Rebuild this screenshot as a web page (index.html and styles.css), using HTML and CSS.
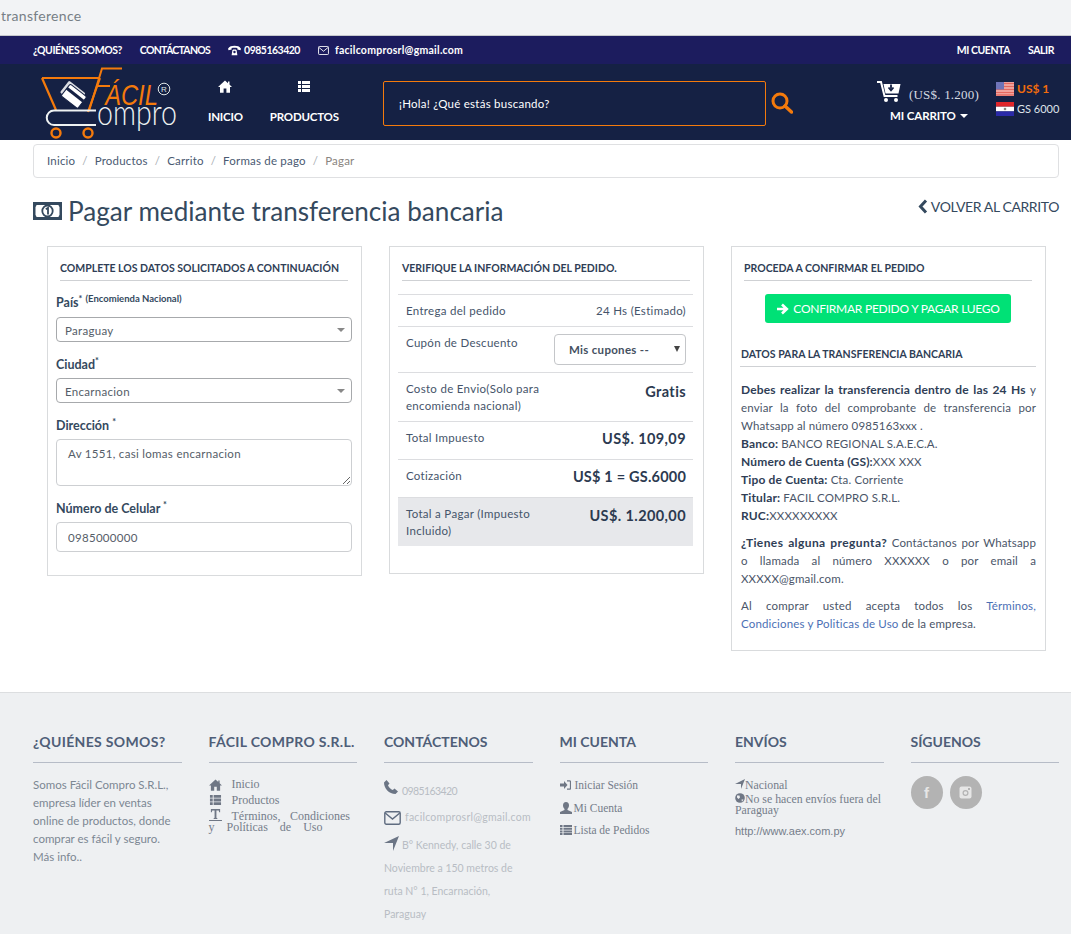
FILE: index.html
```html
<!DOCTYPE html>
<html lang="es">
<head>
<meta charset="utf-8">
<title>Pagar mediante transferencia bancaria</title>
<link rel="stylesheet" href="styles.css">
</head>
<body>
<div class="urlbar">transference</div>
<div class="topbar">
  <div class="topbar-left">
    <a>¿QUIÉNES SOMOS?</a>
    <a class="tight">CONTÁCTANOS</a>
    <a class="with-icon num"><svg class="ic-phone-alt" viewBox="0 0 14 11"><path d="M0 3.6C1.5 1 4 .4 7 .4s5.500.6 7 3.200l-.6 1.500-3.300-.6V2.900C9.200 2.500 4.800 2.500 3.900 2.900v1.600l-3.300.6z" fill="#fff"/><path d="M3.900 10.500 4.700 5.400 5.600 4.300h2.800l.9 1.100.8 5.100z" fill="#fff"/><circle cx="7" cy="7.200" r="1.300" fill="#1c1c5e"/></svg>0985163420</a>
    <a class="with-icon mail"><svg class="ic-mail" viewBox="0 0 12 10"><rect x=".5" y=".5" width="11" height="9" rx="1" fill="none" stroke="#fff"/><path d="M.8 1.500 6 5.800l5.200-4.300" fill="none" stroke="#fff"/></svg>facilcomprosrl@gmail.com</a>
  </div>
  <div class="topbar-right"><a>MI CUENTA</a><a>SALIR</a></div>
</div>
<header class="header">
  <svg class="logo" viewBox="0 0 140 76" role="img" aria-label="Fácil Compro">
    <path d="M2 14H60M2 14 16 46M60 14 48 48" fill="none" stroke="#f47a0c" stroke-width="2.200"/>
    <path d="M49 47 62 4.500H82M57 22H70" fill="none" stroke="#f47a0c" stroke-width="2"/>
    <text class="logo-facil" transform="translate(65 41) scale(1 1.200)" textLength="53" lengthAdjust="spacingAndGlyphs">ÁCIL</text>
    <g transform="rotate(38 33 31)"><rect x="21" y="22" width="21" height="15" rx="1.500" fill="#fff" opacity=".85"/><rect x="24" y="24" width="21" height="15" rx="1.500" fill="#fff" stroke="#152144"/><rect x="24" y="28" width="21" height="3" fill="#152144"/></g>
    <path d="M56 46.500H14a6.500 6.500 0 0 0 0 14.500H56" fill="none" stroke="#eef2f2" stroke-width="2"/>
    <text class="logo-compro" transform="translate(57 61) scale(1 1.250)" textLength="80" lengthAdjust="spacingAndGlyphs">ompro</text>
    <circle cx="16" cy="69" r="4.500" fill="none" stroke="#f47a0c" stroke-width="2.400"/>
    <circle cx="48" cy="69" r="4.500" fill="none" stroke="#f47a0c" stroke-width="2.400"/>
    <circle cx="124" cy="25" r="5.800" fill="none" stroke="#dfe6e6"/>
    <text class="logo-r" x="124" y="28" text-anchor="middle">R</text>
  </svg>
  <nav class="mainnav">
    <a><svg class="ic-nav" viewBox="0 0 14 13"><path d="M7 .5 0 7h2v5.800h3.600V8.500h2.800v4.300H12V7h2l-2.500-2.400V1.500H10v1.700z" fill="#fff"/></svg><span>INICIO</span></a>
    <a><svg class="ic-nav" viewBox="0 0 14 13"><path d="M1 1h3v3H1zM5 1h8v3H5zM1 5h3v3H1zM5 5h8v3H5zM1 9h3v3H1zM5 9h8v3H5z" fill="#fff"/></svg><span>PRODUCTOS</span></a>
  </nav>
  <div class="search">¡Hola! ¿Qué estás buscando?</div>
  <svg class="ic-search" viewBox="0 0 22 22"><circle cx="9" cy="9" r="7" fill="none" stroke="#f47a0c" stroke-width="3"/><path d="M14 14l6.500 6" stroke="#f47a0c" stroke-width="3.500" stroke-linecap="round"/></svg>
  <div class="cart">
    <div class="cart-top">
      <svg class="ic-cart" viewBox="0 0 24 22"><path d="M0 1h4l3.500 14h13" fill="none" stroke="#fff" stroke-width="2"/><path d="M6.500 3h17l-2 9.500H8.500z" fill="#fff"/><path d="M14 3.500v4M11.500 6.500l2.500 2.800 2.500-2.800" fill="none" stroke="#152144" stroke-width="1.800"/><circle cx="9" cy="19" r="2" fill="#fff"/><circle cx="19" cy="19" r="2" fill="#fff"/></svg>
      <span class="cart-amount">(US$. 1.200)</span>
    </div>
    <div class="cart-label">MI CARRITO <i class="caret"></i></div>
  </div>
  <div class="rates">
    <div class="rate usd"><svg class="flag" viewBox="0 0 18 14"><rect width="18" height="14" fill="#f4b6b0"/><path d="M0 1.500h18M0 4.500h18M0 7.500h18M0 10.500h18M0 13h18" stroke="#e4685f" stroke-width="1.300"/><rect width="8" height="7.500" fill="#6f74b8"/></svg>US$ 1</div>
    <div class="rate"><svg class="flag" viewBox="0 0 18 14"><rect width="18" height="4.700" fill="#e0262b"/><rect y="4.700" width="18" height="4.700" fill="#fff"/><rect y="9.400" width="18" height="4.600" fill="#2a2aa8"/><circle cx="9" cy="7" r="1.300" fill="#8a8a80"/></svg>GS 6000</div>
  </div>
</header>

<main class="page">
  <ol class="breadcrumb">
    <li><a>Inicio</a></li><li><a>Productos</a></li><li><a>Carrito</a></li><li><a>Formas de pago</a></li><li class="current">Pagar</li>
  </ol>
  <div class="title-row">
    <h1><svg class="ic-money" viewBox="0 0 29 18"><path d="M0 0h29v18H0z" fill="#34495e"/><path d="M3.500 3h22a3 3 0 0 0 1 2v8a3 3 0 0 0-1 2h-22a3 3 0 0 0-1-2V5a3 3 0 0 0 1-2z" fill="#fff"/><ellipse cx="14.500" cy="9" rx="5.200" ry="5.500" fill="#fff" stroke="#34495e" stroke-width="1.800"/><path d="M12.800 7.200 15 5.800V12.500" fill="none" stroke="#34495e" stroke-width="1.800"/></svg>Pagar mediante transferencia bancaria</h1>
    <a class="back"><svg class="ic-chev" viewBox="0 0 10 15"><path d="M8 1.500 2.500 7.500 8 13.500" fill="none" stroke="#34495e" stroke-width="3"/></svg>VOLVER AL CARRITO</a>
  </div>

  <div class="cards">
    <section class="card">
      <h5 class="card-title">COMPLETE LOS DATOS SOLICITADOS A CONTINUACIÓN</h5>
      <form class="form">
        <label class="lbl lbl-pais">País<sup>*</sup> <sup class="small">(Encomienda Nacional)</sup></label>
        <div class="select-wrap"><select class="control"><option>Paraguay</option></select></div>
        <label class="lbl">Ciudad<sup>*</sup></label>
        <div class="select-wrap"><select class="control"><option>Encarnacion</option></select></div>
        <label class="lbl">Dirección <sup>*</sup></label>
        <textarea class="control area">Av 1551, casi lomas encarnacion</textarea>
        <label class="lbl">Número de Celular <sup>*</sup></label>
        <input class="control phone" value="0985000000">
      </form>
    </section>

    <section class="card">
      <h5 class="card-title">VERIFIQUE LA INFORMACIÓN DEL PEDIDO.</h5>
      <div class="summary">
        <div class="row r1"><span>Entrega del pedido</span><span>24 Hs (Estimado)</span></div>
        <div class="row r2"><span>Cupón de Descuento</span><div class="coupon">Mis cupones --<i></i></div></div>
        <div class="row r3"><span class="wrap">Costo de Envio(Solo para encomienda nacional)</span><b>Gratis</b></div>
        <div class="row r4"><span>Total Impuesto</span><b>US$. 109,09</b></div>
        <div class="row r4"><span>Cotización</span><b class="rate-val">US$ 1 = GS.6000</b></div>
        <div class="row r3 total"><span class="wrap">Total a Pagar (Impuesto Incluido)</span><b>US$. 1.200,00</b></div>
      </div>
    </section>

    <section class="card card-pay">
      <h5 class="card-title">PROCEDA A CONFIRMAR EL PEDIDO</h5>
      <a class="confirm"><svg class="ic-arrow" viewBox="0 0 13 12"><path d="M1 6h9M6 1.500 10.800 6 6 10.500" fill="none" stroke="#fff" stroke-width="2.600"/></svg>CONFIRMAR PEDIDO Y PAGAR LUEGO</a>
      <h5 class="card-sub">DATOS PARA LA TRANSFERENCIA BANCARIA</h5>
      <p class="just"><b>Debes realizar la transferencia dentro de las 24 Hs</b> y enviar la foto del comprobante de transferencia por Whatsapp al número 0985163xxx .</p>
      <p><b>Banco:</b> BANCO REGIONAL S.A.E.C.A.<br><b>Número de Cuenta (GS):</b>XXX XXX<br><b>Tipo de Cuenta:</b> Cta. Corriente<br><b>Titular:</b> FACIL COMPRO S.R.L.<br><b>RUC:</b>XXXXXXXXX</p>
      <p class="just gap"><b>¿Tienes alguna pregunta?</b> Contáctanos por Whatsapp o llamada al número XXXXXX o por email a XXXXX@gmail.com.</p>
      <p class="gap"><span class="line-just">Al comprar usted acepta todos los <a class="link">Términos,</a></span><a class="link">Condiciones y Politicas de Uso</a> de la empresa.</p>
    </section>
  </div>
</main>

<footer class="footer">
  <div class="fcol">
    <h4 class="wide">¿QUIÉNES SOMOS?</h4>
    <p class="about">Somos Fácil Compro S.R.L., empresa líder en ventas online de productos, donde comprar es fácil y seguro.<br>Más info..</p>
  </div>
  <div class="fcol">
    <h4 class="wide">FÁCIL COMPRO S.R.L.</h4>
    <ul class="flinks">
      <li><svg class="ic-f" viewBox="0 0 14 13"><path d="M7 .5 0 7h2v5.800h3.600V8.500h2.800v4.300H12V7h2l-2.500-2.400V1.500H10v1.700z"/></svg>Inicio</li>
      <li><svg class="ic-f" viewBox="0 0 14 13"><path d="M1 1h3v3H1zM5 1h8v3H5zM1 5h3v3H1zM5 5h8v3H5zM1 9h3v3H1zM5 9h8v3H5z"/></svg>Productos</li>
      <li class="terms"><span class="t1"><svg class="ic-f" viewBox="0 0 14 13"><path d="M2 0h10v3.500h-1L10.500 1.500H8V9.500l1 .5v.8H5V10l1-.5V1.500H3.500L3 3.500H2zM0 12h14v1H0z"/></svg>Términos, Condiciones</span><span class="t2">y Políticas de Uso</span></li>
    </ul>
  </div>
  <div class="fcol">
    <h4>CONTÁCTENOS</h4>
    <div class="contact">
      <div class="c-phone"><svg class="ic-c1" viewBox="0 0 14 14"><path d="M0 2.500 2.500 0l3 3.500L4 5.200c.8 2 2.500 3.800 4.800 4.800l1.700-1.500L14 11.500 11.500 14C5 14 0 8.500 0 2.500z"/></svg>0985163420</div>
      <div class="c-mail"><svg class="ic-c2" viewBox="0 0 17 14"><rect x=".8" y=".8" width="15.400" height="12.400" rx="1.500" fill="none" stroke="#5f6c80" stroke-width="1.400"/><path d="M1.200 2 8.500 8 15.800 2" fill="none" stroke="#5f6c80" stroke-width="1.400"/></svg>facilcomprosrl@gmail.com</div>
      <div class="c-addr"><svg class="ic-c3" viewBox="0 0 15 15"><path d="M15 0 9 15V7H0z"/></svg>B° Kennedy, calle 30 de Noviembre a 150 metros de ruta N° 1, Encarnación, Paraguay</div>
    </div>
  </div>
  <div class="fcol">
    <h4>MI CUENTA</h4>
    <ul class="faccount">
      <li><svg class="ic-a" viewBox="0 0 11 10"><path d="M0 3.500h4V1l3.500 4L4 9V6.500H0z"/><path d="M7 .8h2.500c.8 0 1 .5 1 1v6.400c0 .5-.2 1-1 1H7" fill="none" stroke="#6f7785" stroke-width="1.200"/></svg>Iniciar Sesión</li>
      <li><svg class="ic-a2" viewBox="0 0 12 12"><path d="M6 0c2 0 3 1.500 3 3.500 0 1.500-.8 2.800-1.500 3.500v1l4.500 2v2H0v-2l4.500-2V7C3.800 6.300 3 5 3 3.500 3 1.500 4 0 6 0z"/></svg>Mi Cuenta</li>
      <li><svg class="ic-a3" viewBox="0 0 12 10"><path d="M0 0h2.500v2H0zM3.500 0H12v2H3.500zM0 2.700h2.500v2H0zM3.500 2.700H12v2H3.500zM0 5.400h2.500v2H0zM3.500 5.400H12v2H3.500zM0 8h2.500v2H0zM3.500 8H12v2H3.500z"/></svg>Lista de Pedidos</li>
    </ul>
  </div>
  <div class="fcol">
    <h4>ENVÍOS</h4>
    <div class="ship">
      <div class="nac"><svg class="ic-s" viewBox="0 0 10 10"><path d="M10 0 6 10V5H0z"/></svg>Nacional</div>
      <div><svg class="ic-s" viewBox="0 0 10 10"><circle cx="5" cy="5" r="4.800"/><path d="M2 2.500h2.500L5 4.500 3.500 6 2 4.500zM6.500 6.500h2L7 8.800z" fill="#eef0f2"/></svg>No se hacen envíos fuera del Paraguay</div>
      <div class="url">http://www.aex.com.py</div>
    </div>
  </div>
  <div class="fcol">
    <h4>SÍGUENOS</h4>
    <div class="social">
      <a class="circle fb">f</a>
      <a class="circle"><svg class="ic-ig" viewBox="0 0 13 13"><rect x=".5" y=".5" width="12" height="12" rx="2" fill="#e6e6e6"/><circle cx="6.500" cy="7" r="3" fill="#b3b3b3"/><circle cx="6.500" cy="7" r="1.800" fill="#e6e6e6"/><rect x="9" y="2" width="2" height="2" fill="#b3b3b3"/></svg></a>
    </div>
  </div>
</footer>
</body>
</html>
```
FILE: styles.css
```css
* { box-sizing: border-box; }
html, body { margin: 0; padding: 0; }
body {
  width: 1071px;
  font-family: "Lato", "Liberation Sans", sans-serif;
  font-size: 13px;
  line-height: 18px;
  color: #3f4c60;
  background: #fff;
}
a { color: inherit; text-decoration: none; }
svg { display: block; flex: none; }

.urlbar {
  height: 36px;
  padding: 6px 0 0 1px;
  font-size: 14px;
  line-height: 20px;
  color: #777f86;
  letter-spacing: .3px;
  background: #f2f3f5;
  border-bottom: 1px solid #c6c8cc;
}

.topbar {
  height: 28px;
  padding: 0 17px 0 33px;
  display: flex;
  align-items: center;
  justify-content: space-between;
  background: #1c1c5e;
  color: #fff;
  font-size: 10.500px;
  font-weight: 700;
  letter-spacing: -.45px;
}
.topbar-left, .topbar-right { display: flex; align-items: center; }
.topbar-left { gap: 18px; }
.topbar-right { gap: 18px; }
.tight { letter-spacing: -.72px; }
.with-icon { display: flex; align-items: center; gap: 3px; }
.num { letter-spacing: -.5px; }
.mail { gap: 6px; letter-spacing: .25px; }
.ic-phone-alt { width: 13px; height: 11px; }
.ic-mail { width: 11px; height: 9px; }

.header {
  height: 76px;
  display: flex;
  background: #152144;
  color: #fff;
  padding-left: 40px;
}
.logo { width: 140px; height: 76px; }
.logo-facil { font: italic 400 24px "Liberation Sans", sans-serif; fill: #f47a0c; }
.logo-compro { font: 300 29px "Lato", sans-serif; fill: #eef2f2; }
.logo-r { font: 400 8px "Liberation Sans", sans-serif; fill: #dfe6e6; }
.mainnav {
  display: flex;
  gap: 27px;
  margin: 16px 0 0 28px;
  font-size: 11.500px;
  font-weight: 700;
  letter-spacing: -.2px;
  width: 175px;
  flex: none;
}
.mainnav a { display: flex; flex-direction: column; align-items: center; gap: 15px; }
.ic-nav { width: 14px; height: 13px; }
.search {
  width: 383px;
  height: 45px;
  flex: none;
  margin-top: 17px;
  padding: 13px 15px 0;
  font-size: 11.500px;
  letter-spacing: .25px;
  border: 1px solid #f47a0c;
  border-radius: 2px;
}
.ic-search { width: 22px; height: 22px; margin: 28px 0 0 5px; }
.cart { width: 102px; margin-left: 84px; flex: none; padding-top: 15px; }
.cart-top { display: flex; align-items: flex-end; gap: 8px; height: 24px; }
.ic-cart { width: 24px; height: 22px; }
.cart-amount { font: 13px/16px "Liberation Serif", serif; letter-spacing: .2px; color: #d6dae2; white-space: nowrap; }
.cart-label { margin: 4px 0 0 13px; font-size: 11.500px; font-weight: 700; white-space: nowrap; letter-spacing: -.1px; }
.caret {
  display: inline-block;
  margin-left: 2px;
  vertical-align: 2px;
  border: 4px solid transparent;
  border-top-color: #fff;
  border-bottom: 0;
}
.rates { margin-left: 17px; padding-top: 15px; font-size: 11px; }
.rate { display: flex; align-items: center; gap: 3px; height: 20px; white-space: nowrap; color: #dfe3ea; }
.usd { color: #f26c0d; font-weight: 700; font-size: 12px; }
.flag { width: 18px; height: 14px; }

.page { padding: 4px 12px 41px 33px; }
.breadcrumb {
  display: flex;
  height: 34px;
  margin: 0;
  padding: 0 13px;
  align-items: center;
  list-style: none;
  font-size: 11.500px;
  letter-spacing: .2px;
  color: #4a5a72;
  border: 1px solid #dfe0e2;
  border-radius: 4px;
}
.breadcrumb li + li::before { content: "/"; padding: 0 7px; color: #a9adb3; }
.breadcrumb .current { color: #8a8580; }
.title-row { display: flex; justify-content: space-between; margin-top: 16px; height: 52px; }
.title-row h1 {
  display: flex;
  align-items: center;
  gap: 6px;
  height: 34px;
  margin: 0;
  font-size: 26.100px;
  font-weight: 400;
  color: #34495e;
}
.ic-money { width: 29px; height: 18px; }
.back { display: flex; align-items: center; gap: 3px; height: 25px; font-size: 14px; letter-spacing: -.4px; color: #34495e; }
.ic-chev { width: 10px; height: 15px; }

.cards { display: flex; gap: 27px; align-items: flex-start; padding-left: 14px; }
.card {
  width: 315px;
  min-height: 330px;
  padding: 13px 13px 23px 12px;
  border: 1px solid #d9dbdd;
}
.card:nth-child(2) { min-height: 328px; }
.card-title {
  margin: 0;
  height: 21px;
  font-size: 10.500px;
  line-height: 16px;
  font-weight: 700;
  color: #2f3e56;
  border-bottom: 1px solid #cfd1d4;
}
.form { margin: 0 -4px; display: flex; flex-direction: column; }
.lbl {
  display: block;
  height: 20px;
  margin-top: 16px;
  font-size: 12.500px;
  line-height: 13px;
  font-weight: 700;
  color: #34495e;
}
.lbl-pais { margin-top: 11px; height: 25px; line-height: 22px; }
.lbl sup { font-size: 9px; line-height: 0; vertical-align: 5px; }
.lbl .small { font-size: 9.500px; }
.select-wrap { position: relative; }
.select-wrap::after {
  content: "";
  position: absolute;
  right: 7px;
  top: 11px;
  border: 4px solid transparent;
  border-top: 4px solid #888;
  border-bottom: 0;
}
.control {
  display: block;
  width: 296px;
  font-family: inherit;
  font-size: 11.500px;
  letter-spacing: .3px;
  color: #555d68;
  background: #fff;
  border: 1px solid #a7a9ac;
  border-radius: 4px;
  outline: 0;
}
select.control { height: 25px; padding: 1px 8px 0; appearance: none; -webkit-appearance: none; }
.area { height: 47px; padding: 7px 11px; border-color: #cdcfd2; }
.phone { height: 30px; padding: 0 11px; border-color: #cdcfd2; }

.summary { margin: 13px -3px 0 -4px; border-top: 1px solid #dcdde0; }
.row {
  display: flex;
  justify-content: space-between;
  padding: 7px 7px 7px 8px;
  font-size: 11.500px;
  line-height: 17px;
  letter-spacing: .3px;
  color: #45546a;
  border-bottom: 1px solid #dcdde0;
}
.r1 { height: 32px; }
.r2 { height: 46px; }
.r3 { height: 49px; }
.r4 { height: 38px; }
.row b { font-size: 14.500px; line-height: 20px; color: #2c3a50; letter-spacing: .4px; white-space: nowrap; }
.row .rate-val { letter-spacing: .2px; }
.r3 b { margin-top: 2px; }
.row.total { height: 48px; border-bottom: 0; background: #e7e8eb; }
.total b { margin-top: 1px; }
.wrap { width: 135px; }
.r3.total .wrap { width: 140px; }
.coupon {
  position: relative;
  width: 132px;
  height: 31px;
  margin-top: 0;
  padding: 6px 0 0 14px;
  font-weight: 700;
  color: #45505f;
  background: #fff;
  border: 1px solid #c4c6c9;
  border-radius: 4px;
}
.coupon i {
  position: absolute;
  right: 5px;
  top: 11px;
  border: 3.500px solid transparent;
  border-top: 6px solid #444;
  border-bottom: 0;
}

.card-pay { padding-bottom: 17px; }
.confirm {
  display: flex;
  align-items: center;
  justify-content: center;
  gap: 4px;
  width: 246px;
  height: 29px;
  margin: 13px 0 0 21px;
  font-size: 12px;
  letter-spacing: -.25px;
  color: #fff;
  background: #00e176;
  border-radius: 3px;
}
.ic-arrow { width: 13px; height: 12px; }
.card-sub {
  height: 21px;
  margin: 23px -4px 14px -4px;
  padding-left: 1px;
  font-size: 10.500px;
  line-height: 16px;
  font-weight: 700;
  color: #2f3e56;
  border-bottom: 1px solid #cfd1d4;
}
.card-pay p {
  margin: 0 -4px 0 -3px;
  font-size: 11.500px;
  line-height: 18px;
  color: #4a5568;
  letter-spacing: .15px;
}
.card-pay b { color: #2f3e56; font-size: 12px; }
.just { text-align: justify; }
.card-pay .gap { margin-top: 9px; }
.card-pay .gap b { letter-spacing: .4px; }
.line-just { display: block; text-align: justify; text-align-last: justify; }
.link { color: #4b70b5; }

.footer {
  height: 242px;
  padding: 40px 12px 0 33px;
  display: grid;
  grid-template-columns: repeat(6, 148.500px);
  column-gap: 27px;
  background: #eef0f2;
  border-top: 1px solid #dcdee0;
}
.fcol h4 {
  height: 30px;
  margin: 0;
  font-size: 14px;
  line-height: 18px;
  font-weight: 700;
  color: #4f5e78;
  border-bottom: 1px solid #b6bcc7;
  white-space: nowrap;
}
.fcol .wide { letter-spacing: .33px; }
.about { margin: 13px 0 0; font-size: 11.500px; line-height: 18px; color: #7c8793; }
.flinks, .faccount { margin: 0; padding: 0; list-style: none; font-family: "Liberation Serif", serif; color: #757d8a; }
.flinks { font-size: 12px; line-height: 11px; padding-top: 14px; }
.flinks li { display: flex; align-items: center; gap: 10px; height: 15.500px; }
.flinks li svg, .faccount svg, .ship svg { fill: #6f7785; }
.ic-f { width: 13px; height: 12px; }
.flinks .terms { display: block; height: auto; padding: 1px 7px 0 0; }
.t1 { display: block; text-align: justify; text-align-last: justify; }
.t1 .ic-f { display: inline-block; margin-right: 10px; vertical-align: -1px; }
.t2 { display: block; word-spacing: 9px; }
.contact { color: #b8bdc4; font-size: 10.500px; line-height: 23px; padding-top: 13px; }
.contact svg { fill: #6b7585; }
.c-phone { display: flex; align-items: flex-start; gap: 4px; height: 28px; padding-top: 4px; letter-spacing: -.6px; }
.ic-c1 { width: 14px; height: 14px; }
.c-mail { display: flex; align-items: center; gap: 4px; height: 27px; letter-spacing: .25px; }
.ic-c2 { width: 17px; height: 14px; }
.ic-c3 { display: inline-block; width: 15px; height: 15px; margin-right: 3px; vertical-align: -2px; }
.c-addr { margin-top: 3px; padding-right: 15px; }
.faccount { font-size: 11.500px; line-height: 16px; padding-top: 11px; }
.faccount li { display: flex; align-items: center; gap: 2px; height: 22.500px; }
.ic-a { width: 11px; height: 10px; margin-right: 2px; }
.ic-a2 { width: 12px; height: 12px; }
.ic-a3 { width: 12px; height: 10px; }
.ship { font: 11.800px/11px "Liberation Serif", serif; color: #757d8a; padding-top: 16px; }
.ship svg { display: inline-block; width: 10px; height: 10px; }
.nac { margin-bottom: 2px; }
.url { margin-top: 8px; font: 11px/14px "Liberation Sans", sans-serif; }
.social { display: flex; gap: 7px; padding-top: 13px; }
.circle {
  display: flex;
  align-items: center;
  justify-content: center;
  width: 32px;
  height: 33px;
  border-radius: 50%;
  background: #b3b3b3;
  color: #e6e6e6;
}
.fb { font: 700 15px "Liberation Sans", sans-serif; }
.ic-ig { width: 13px; height: 13px; }
```
